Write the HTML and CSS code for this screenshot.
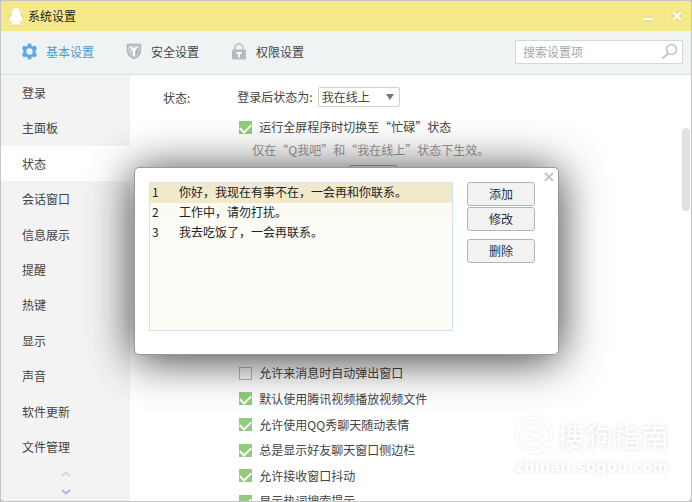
FILE: index.html
```html
<!DOCTYPE html>
<html lang="zh-CN">
<head>
    <meta charset="UTF-8">
    <meta name="viewport" content="width=device-width, initial-scale=1.0">
    <title>系统设置</title>
    <link rel="stylesheet" href="styles.css">
</head>
<body>

<div class="window">
    <header class="titlebar">
        <svg class="logo" viewBox="0 0 14 17" width="14" height="17">
            <path d="M7 0C4 0 2.500 2 2.500 5v2.500C1.200 9 .2 11 .5 13c.3 1 1 .3 1.600-.4.2.8.6 1.400 1.200 2-1 .4-1.300 1-1 1.600.5.8 3.700.8 4.700.1 1 .7 4.200.7 4.700-.1.3-.6 0-1.200-1-1.600.6-.6 1-1.200 1.200-2 .6.700 1.300 1.400 1.600.4.3-2-.7-4-2-5.500V5C11.500 2 10 0 7 0z" fill="#fff"/>
        </svg>
        <h1>系统设置</h1>
        <button class="win-btn" type="button" aria-label="最小化">
            <svg viewBox="0 0 12 12" width="12" height="12"><path d="M1 9h10" stroke="#fff" stroke-width="2.400"/></svg>
        </button>
        <button class="win-btn" type="button" aria-label="关闭">
            <svg viewBox="0 0 12 12" width="12" height="12"><path d="M2 2l8 8M10 2l-8 8" stroke="#fff" stroke-width="2.200"/></svg>
        </button>
    </header>

    <div class="toolbar">
        <nav class="tabs">
            <a class="tab active" href="#basic">
                <svg viewBox="0 0 17 17" width="17" height="17">
                    <path fill-rule="evenodd" fill="#5aa9ea" d="M7 .5h3l.5 2.200 1.600.8 2.100-.9 1.900 2.600-1.400 1.700v3.200l1.400 1.700-1.900 2.600-2.100-.9-1.600.8L10 16.500H7l-.5-2.200-1.600-.8-2.100.9-1.900-2.600 1.400-1.700V6.900L.9 5.200l1.900-2.600 2.100.9 1.600-.8zM8.500 5.300a3.200 3.200 0 1 0 0 6.400 3.200 3.200 0 0 0 0-6.400z"/>
                </svg>
                <span>基本设置</span>
            </a>
            <a class="tab" href="#security">
                <svg viewBox="0 0 17 17" width="17" height="17">
                    <path d="M1.500 1.500h13v6.500c0 3.500-3 6-6.500 7.500-3.500-1.500-6.500-4-6.500-7.500z" fill="#c9cfd2" stroke="#adb6ba" stroke-width="1.400"/>
                    <path d="M4 4h2.500L8 6l1.500-2H12L9 8v4.500L8 13l-1-.5V8z" fill="#fff"/>
                    <path d="M12.500 3.500V8c0 2-1.300 3.600-3 4.800V8z" fill="#a9b3b8"/>
                </svg>
                <span>安全设置</span>
            </a>
            <a class="tab" href="#privacy">
                <svg viewBox="0 0 17 17" width="17" height="17">
                    <path d="M4 7V5a4 4 0 0 1 8 0v2" fill="none" stroke="#c3cacd" stroke-width="2"/>
                    <rect x="1" y="6.500" width="14" height="10" rx="1" fill="#b3bbbf"/>
                    <path d="M5.500 9h5v2H9v3.500H7V11H5.500z" fill="#fff"/>
                </svg>
                <span>权限设置</span>
            </a>
        </nav>
        <div class="search">
            <input type="text" placeholder="搜索设置项" aria-label="搜索设置项">
            <svg viewBox="0 0 17 17" width="17" height="17">
                <circle cx="10.500" cy="6.500" r="5" fill="none" stroke="#c2c2c2" stroke-width="1.600"/>
                <path d="M7 10.500L1.500 15.500" stroke="#c2c2c2" stroke-width="2"/>
            </svg>
        </div>
    </div>

    <div class="main">
        <aside class="sidebar">
            <nav class="menu">
                <a href="#login">登录</a>
                <a href="#panel">主面板</a>
                <a class="active" href="#status">状态</a>
                <a href="#chat">会话窗口</a>
                <a href="#info">信息展示</a>
                <a href="#remind">提醒</a>
                <a href="#hotkey">热键</a>
                <a href="#display">显示</a>
                <a href="#sound">声音</a>
                <a href="#update">软件更新</a>
                <a href="#files">文件管理</a>
            </nav>
            <div class="pager">
                <button type="button" aria-label="向上">
                    <svg viewBox="0 0 10 6" width="10" height="6"><path d="M1 5l4-3.500L9 5" fill="none" stroke="#cbd9ec" stroke-width="2"/></svg>
                </button>
                <button type="button" aria-label="向下">
                    <svg viewBox="0 0 10 6" width="10" height="6"><path d="M1 1l4 3.500L9 1" fill="none" stroke="#a3bde0" stroke-width="2"/></svg>
                </button>
            </div>
        </aside>

        <main class="content">
            <h2>状态:</h2>
            <div class="options">
                <div class="status-row">
                    <label for="status">登录后状态为:</label>
                    <span class="select">
                        <select id="status">
                            <option>我在线上</option>
                            <option>忙碌</option>
                            <option>隐身</option>
                        </select>
                    </span>
                </div>
                <label class="check first"><input type="checkbox" checked><span>运行全屏程序时切换至“忙碌”状态</span></label>
                <p class="hint">仅在“Q我吧”和“我在线上”状态下生效。</p>
                <div class="auto-reply">
                    <button type="button">设置</button>
                </div>
                <div class="check-list">
                    <div class="check">
                        <input id="preview" type="checkbox" checked>
                        <label for="preview">不显示好友消息预览提示窗</label>
                        <a class="link" href="#message">新消息设置</a>
                    </div>
                    <label class="check"><input type="checkbox"><span>允许来消息时自动弹出窗口</span></label>
                    <label class="check"><input type="checkbox" checked><span>默认使用腾讯视频播放视频文件</span></label>
                    <label class="check"><input type="checkbox" checked><span>允许使用QQ秀聊天随动表情</span></label>
                    <label class="check"><input type="checkbox" checked><span>总是显示好友聊天窗口侧边栏</span></label>
                    <label class="check"><input type="checkbox" checked><span>允许接收窗口抖动</span></label>
                    <label class="check"><input type="checkbox" checked><span>显示热词搜索提示</span></label>
                </div>
            </div>
            <div class="scroll-thumb"></div>
        </main>
    </div>

    <div class="watermark">
        <div class="brand">
            <svg viewBox="0 0 38 38" width="38" height="38">
                <path d="M30 31A17 17 0 1 1 34.500 25" fill="none" stroke="#fff" stroke-width="3"/>
                <path d="M27 12c-4-2-15-3-15 2 0 6 15 3 15 9 0 5-11 5-16 2" fill="none" stroke="#fff" stroke-width="4"/>
                <path d="M30 35l5-4" stroke="#fff" stroke-width="3"/>
            </svg>
            <span>搜狗指南</span>
        </div>
        <div class="site">zhinan.sogou.com</div>
    </div>

    <div class="dialog" role="dialog" aria-label="自动回复">
        <div class="reply-box">
            <table class="replies">
                <tbody>
                    <tr class="selected"><td>1</td><td>你好，我现在有事不在，一会再和你联系。</td></tr>
                    <tr class="alt"><td>2</td><td>工作中，请勿打扰。</td></tr>
                    <tr><td>3</td><td>我去吃饭了，一会再联系。</td></tr>
                </tbody>
            </table>
        </div>
        <div class="actions">
            <button type="button">添加</button>
            <button type="button">修改</button>
            <button class="delete" type="button">删除</button>
        </div>
        <button class="close" type="button" aria-label="关闭">
            <svg viewBox="0 0 10 10" width="10" height="10"><path d="M1 1l8 8M9 1L1 9" stroke="#c4c4c4" stroke-width="2"/></svg>
        </button>
    </div>
</div>

</body>
</html>
```
FILE: styles.css
```css
* {
    box-sizing: border-box;
}
body {
    margin: 0;
    background: #c4c4c4;
    color: #444;
    font-family: "Noto Sans CJK SC", "Noto Sans", sans-serif;
    font-size: 12px;
    line-height: 18px;
}
button, input, select {
    font: inherit;
    color: inherit;
}
button {
    padding: 0;
    border: none;
    background: none;
}
svg {
    display: block;
    flex: none;
}
a {
    color: inherit;
    text-decoration: none;
}
.window {
    position: relative;
    display: flex;
    flex-direction: column;
    height: 100vh;
    border: 1px solid #c4c4c4;
    border-radius: 5px;
    background: #fff;
    overflow: hidden;
}

/* title bar */
.titlebar {
    display: flex;
    align-items: center;
    height: 30px;
    padding: 0 8px;
    background: #f6e98a;
}
.titlebar h1 {
    flex: 1;
    margin: 0 0 0 5px;
    font-size: 12px;
    font-weight: normal;
    color: #222;
}
.logo {
    filter: drop-shadow(0 0 1px #d8cc7c);
}
.win-btn {
    margin-left: 17px;
}
.win-btn svg {
    filter: drop-shadow(0 0 1px #c9be70);
}

/* toolbar */
.toolbar {
    display: flex;
    align-items: center;
    justify-content: space-between;
    height: 44px;
    padding: 0 8px 2px 20px;
    border-bottom: 1px solid #dfe2e2;
    background: #f0f3f3;
}
.tabs {
    display: flex;
    gap: 32px;
}
.tab {
    display: flex;
    align-items: center;
    gap: 8px;
}
.tab.active {
    color: #4a9bd0;
}
.search {
    display: flex;
    align-items: center;
    width: 168px;
    height: 24px;
    padding: 0 4px 0 7px;
    border: 1px solid #d4d7d7;
    background: #fff;
}
.search input {
    flex: 1;
    min-width: 0;
    padding: 0;
    border: none;
    outline: none;
    background: none;
}
.search input::placeholder {
    color: #a6a6a6;
}

/* body */
.main {
    flex: 1;
    display: flex;
    min-height: 0;
}
.sidebar {
    display: flex;
    flex-direction: column;
    width: 129px;
    background: #f3f3f3;
}
.menu {
    flex: 1;
    display: flex;
    flex-direction: column;
}
.menu a {
    flex: 1;
    display: flex;
    align-items: center;
    padding-left: 21px;
}
.menu a.active {
    background: #fff;
}
.pager {
    display: flex;
    flex-direction: column;
    align-items: center;
    gap: 12px;
    height: 36px;
    padding-top: 6px;
}
.content {
    position: relative;
    flex: 1;
    display: flex;
    gap: 47px;
    padding: 12px 20px 0 33px;
}
.content h2 {
    margin: 2px 0 0;
    font-size: 12px;
    font-weight: normal;
}
.options {
    flex: 1;
    display: flex;
    flex-direction: column;
}
.status-row {
    display: flex;
    align-items: center;
    gap: 5px;
    height: 20px;
}
.select {
    position: relative;
}
.select select {
    display: block;
    appearance: none;
    width: 82px;
    height: 20px;
    padding: 0 3px;
    border: 1px solid #d0d0d0;
    border-radius: 2px;
    background: #fff;
}
.select::after {
    content: "";
    position: absolute;
    top: 7px;
    right: 6px;
    border: 4px solid transparent;
    border-top: 6px solid #777;
    border-bottom: none;
    pointer-events: none;
}
.check {
    display: flex;
    align-items: center;
    gap: 7px;
}
.check.first {
    margin: 11px 0 0 2px;
}
.check input {
    appearance: none;
    display: flex;
    justify-content: center;
    flex: none;
    width: 13px;
    height: 13px;
    margin: 0;
    border: 1px solid #bbb;
    background: transparent;
}
.check input:checked {
    border-color: #93cb7c;
    background: #93cb7c;
}
.check input:checked::before {
    content: "";
    width: 5px;
    height: 9px;
    border: solid #fff;
    border-width: 0 2px 2px 0;
    transform: rotate(45deg);
}
.hint {
    margin: 5px 0 0 15px;
    color: #999;
}
.auto-reply {
    height: 176px;
    padding: 6px 0 0 112px;
}
.auto-reply button {
    width: 48px;
    height: 20px;
    border: 1px solid #aaa;
    border-radius: 2px;
}
/* the last row runs past the bottom edge of the window */
.check-list {
    flex: 1;
    display: flex;
    flex-direction: column;
    margin: 0 0 -13px 2px;
}
.check-list .check {
    flex: 1;
}
.link {
    margin-left: 8px;
    color: #3aa0c8;
}
.scroll-thumb {
    position: absolute;
    top: 53px;
    right: 1px;
    width: 8px;
    height: 83px;
    border-radius: 4px;
    background: #e1e1e1;
}

/* watermark */
.watermark {
    position: absolute;
    right: 22px;
    bottom: 22px;
    color: #fff;
    text-shadow: 0 0 4px #ddd;
}
.brand {
    display: flex;
    align-items: center;
    gap: 4px;
    font-size: 28px;
    line-height: 38px;
}
.brand svg {
    filter: drop-shadow(0 0 1px #e4e4e4);
}
.site {
    font-family: "DejaVu Sans", sans-serif;
    font-size: 15px;
    font-weight: bold;
    line-height: 24px;
}

/* auto reply dialog */
.dialog {
    position: absolute;
    top: 166px;
    left: 133px;
    display: flex;
    gap: 14px;
    padding: 14px 23px 23px 14px;
    border: 1px solid #999;
    border-radius: 5px;
    background: #fff;
    box-shadow: 0 4px 46px rgba(0, 0, 0, 0.8);
    color: #222;
}
.reply-box {
    width: 304px;
    height: 149px;
    border: 1px solid #d3e2ec;
    background: #fcfdf6;
}
.replies {
    width: 100%;
    border-collapse: collapse;
}
.replies td {
    height: 20px;
    padding: 0 0 0 2px;
    line-height: 18px;
    vertical-align: top;
}
.replies td:first-child {
    width: 27px;
}
.replies .selected {
    background: #f2e9cb;
}
.replies .alt {
    background: #fbfaf3;
}
.actions {
    display: flex;
    flex-direction: column;
    gap: 1px;
}
.actions button {
    width: 68px;
    height: 24px;
    border: 1px solid #b3b3b3;
    border-radius: 3px;
    background: #f2f2f2;
    color: #1d3345;
}
.actions .delete {
    margin-top: 7px;
}
.close {
    position: absolute;
    top: 4px;
    right: 4px;
}
```
